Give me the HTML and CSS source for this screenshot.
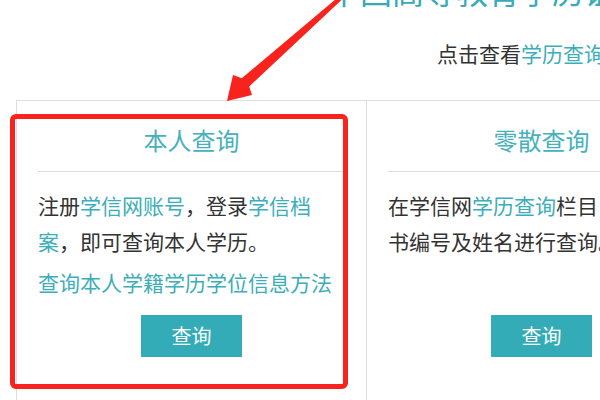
FILE: index.html
```html
<!DOCTYPE html>
<html lang="zh-CN">
<head>
<meta charset="utf-8">
<title>学历查询</title>
<link rel="stylesheet" href="styles.css">
</head>
<body>
<div class="page">
  <h1 class="site-title">中国高等教育学历证书查询</h1>
  <p class="subtitle">点击查看<a class="link">学历查询说明</a></p>
  <div class="cards">
    <section class="card">
      <h2 class="card-title">本人查询</h2>
      <div class="card-body">
        <p class="card-text">注册<a class="link">学信网账号</a>，登录<a class="link">学信档案</a>，即可查询本人学历。</p>
        <p class="card-more"><a class="link">查询本人学籍学历学位信息方法</a></p>
      </div>
      <a class="btn">查询</a>
    </section>
    <section class="card">
      <h2 class="card-title">零散查询</h2>
      <div class="card-body">
        <p class="card-text">在学信网<a class="link">学历查询</a>栏目，输入证书编号及姓名进行查询。</p>
      </div>
      <a class="btn">查询</a>
    </section>
  </div>
  <div class="highlight"></div>
  <svg class="arrow" width="600" height="400" viewBox="0 0 600 400">
    <polygon points="227,101 252,95 249.2,86.4 346.3,-4.5 343.7,-7.5 241.8,78.2 233,75" fill="#f8231c"/>
  </svg>
</div>
</body>
</html>
```
FILE: styles.css
```css
html, body {
  margin: 0;
  padding: 0;
  background: #fff;
  overflow: hidden;
}
body {
  width: 600px;
  height: 400px;
  font-family: "Noto Sans CJK SC", "Noto Sans", sans-serif;
  color: #333;
}
.page {
  position: relative;
  width: 600px;
  height: 400px;
  overflow: hidden;
}
.site-title {
  margin: -26px 0 0 0;
  padding-left: 328px;
  font-size: 32px;
  line-height: 32px;
  font-weight: normal;
  color: #3aaab8;
  white-space: nowrap;
}
.subtitle {
  margin: 29px 0 0 0;
  padding-left: 437px;
  font-size: 21px;
  line-height: 36px;
  white-space: nowrap;
}
.link {
  color: #3caeb9;
  text-decoration: none;
}
.cards {
  margin: 29px 0 0 16px;
  width: 703px;
  display: grid;
  grid-template-columns: 350px 350px;
  border-top: 1px solid #dcdcdc;
  border-left: 1px solid #dcdcdc;
}
.card {
  display: flex;
  flex-direction: column;
  padding: 0 21px 60px;
  border-right: 1px solid #dcdcdc;
}
.card-title {
  margin: 0;
  padding: 20px 0 12px;
  font-size: 24px;
  line-height: 38px;
  font-weight: normal;
  text-align: center;
  color: #45b1bc;
  border-bottom: 1px solid #dcdcdc;
}
.card-body {
  padding: 15px 0 15px;
  font-size: 21px;
  line-height: 36px;
}
.card-text {
  margin: 0;
}
.card-more {
  margin: 5px 0 0 0;
  white-space: nowrap;
}
.btn {
  align-self: center;
  margin-top: auto;
  width: 101px;
  height: 42px;
  line-height: 42px;
  text-align: center;
  background: #33acb8;
  color: #fff;
  font-size: 20px;
}
.highlight {
  position: absolute;
  left: 10px;
  top: 114px;
  width: 328px;
  height: 265px;
  border: 5px solid #f8231c;
  border-radius: 6px;
}
.arrow {
  position: absolute;
  left: 0;
  top: 0;
  pointer-events: none;
}
```
